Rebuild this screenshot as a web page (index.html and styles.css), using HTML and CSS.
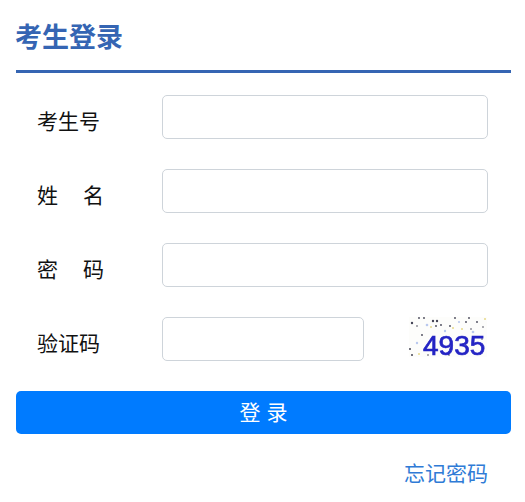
FILE: index.html
```html
<!DOCTYPE html>
<html lang="zh-CN">
<head>
    <meta charset="UTF-8">
    <meta name="viewport" content="width=device-width, initial-scale=1.0">
    <title>考生登录</title>
    <link rel="stylesheet" href="styles.css">
</head>
<body>
    <div class="container">
        <div class="title">
            <h1>考生登录</h1>
        </div>
        <form class="login-form">
            <div class="form-field">
                <label for="examNo">考生号</label>
                <input type="text" id="examNo">
            </div>
            <div class="form-field">
                <label class="spread" for="userName"><span>姓</span><span>名</span></label>
                <input type="text" id="userName">
            </div>
            <div class="form-field">
                <label class="spread" for="password"><span>密</span><span>码</span></label>
                <input type="password" id="password">
            </div>
            <div class="form-field captcha-field">
                <label for="captcha">验证码</label>
                <input type="text" id="captcha">
                <svg class="captcha-img" width="78" height="46" viewBox="0 0 78 46">
                    <rect width="78" height="40" fill="#fdfdfb"/>
                    <g fill="#445">
                        <circle cx="3" cy="6" r="1.2"/><circle cx="10" cy="1" r="0.9"/><circle cx="15" cy="1" r="0.9"/>
                        <circle cx="24" cy="4" r="1.2"/><circle cx="28" cy="4" r="1.2"/><circle cx="32" cy="8" r="0.9"/>
                        <circle cx="46" cy="1" r="0.9"/><circle cx="60" cy="1" r="0.9"/><circle cx="57" cy="5" r="0.9"/>
                        <circle cx="41" cy="9" r="0.9"/><circle cx="27" cy="9" r="0.9"/><circle cx="68" cy="5" r="0.9"/>
                        <circle cx="8" cy="9" r="0.8"/><circle cx="13" cy="18" r="0.9"/><circle cx="1" cy="32" r="1"/>
                        <circle cx="19" cy="38" r="0.8"/><circle cx="3" cy="38" r="1"/><circle cx="40" cy="38" r="0.8"/>
                        <circle cx="74" cy="10" r="0.8"/><circle cx="73" cy="22" r="0.8"/><circle cx="62" cy="12" r="0.8"/>
                    </g>
                    <g fill="#e6d98a">
                        <circle cx="22" cy="10" r="1"/><circle cx="44" cy="11" r="1"/><circle cx="76" cy="2" r="1"/>
                        <circle cx="10" cy="37" r="1"/><circle cx="53" cy="12" r="1"/>
                    </g>
                    <g fill="#b9c8ee">
                        <circle cx="18" cy="8" r="1.3"/><circle cx="36" cy="14" r="1.2"/><circle cx="64" cy="15" r="1.3"/>
                        <circle cx="50" cy="5" r="1.1"/><circle cx="8" cy="26" r="1.2"/>
                    </g>
                    <text class="captcha-text" x="14" y="38">4935</text>
                </svg>
            </div>
            <button class="btn" type="submit">登 录</button>
            <div class="links">
                <a href="#">忘记密码</a>
            </div>
        </form>
    </div>
</body>
</html>
```

FILE: styles.css
```css
*{
    box-sizing: border-box;
    margin: 0;
    padding: 0;
}
body{
    background-color: #fff;
    color: #111;
    font-family: "Liberation Sans", "Noto Sans CJK SC", sans-serif;
    font-size: 21px;
}
.container{
    padding: 0 14px 0 16px;
}
.title{
    height: 73px;
    border-bottom: 3px solid #3565b3;
    display: flex;
    align-items: center;
}
.title h1{
    font-size: 27px;
    font-weight: 700;
    color: #3565b3;
    margin-left: -1px;
}
.login-form{
    padding-top: 22px;
}
.form-field{
    display: flex;
    align-items: center;
    height: 44px;
    margin-bottom: 30px;
    padding-left: 21px;
    padding-right: 23px;
}
.form-field label{
    width: 125px;
    flex-shrink: 0;
    margin-top: 5px;
}
.form-field .spread{
    display: flex;
    justify-content: space-between;
    width: 67px;
    margin-right: 58px;
}
input{
    flex: 1;
    height: 44px;
    min-width: 0;
    border: 1px solid #ced4da;
    border-radius: 5px;
    background-color: #fff;
    outline: none;
}
.captcha-field input{
    flex: none;
    width: 202px;
}
.captcha-img{
    align-self: flex-start;
    flex-shrink: 0;
    margin-left: 45px;
}
.captcha-text{
    font-family: "Liberation Sans", sans-serif;
    font-size: 28px;
    fill: #2424c4;
    stroke: #2424c4;
    stroke-width: 0.7px;
    filter: blur(0.4px);
}
.btn{
    display: block;
    width: 100%;
    height: 43px;
    padding-bottom: 3px;
    border: none;
    border-radius: 5px;
    background-color: #007bff;
    color: #fff;
    font-family: inherit;
    font-size: 21px;
}
.links{
    display: flex;
    justify-content: flex-end;
    padding-right: 23px;
    margin-top: 23px;
}
.links a{
    color: #2f7bd6;
    text-decoration: none;
}
```
